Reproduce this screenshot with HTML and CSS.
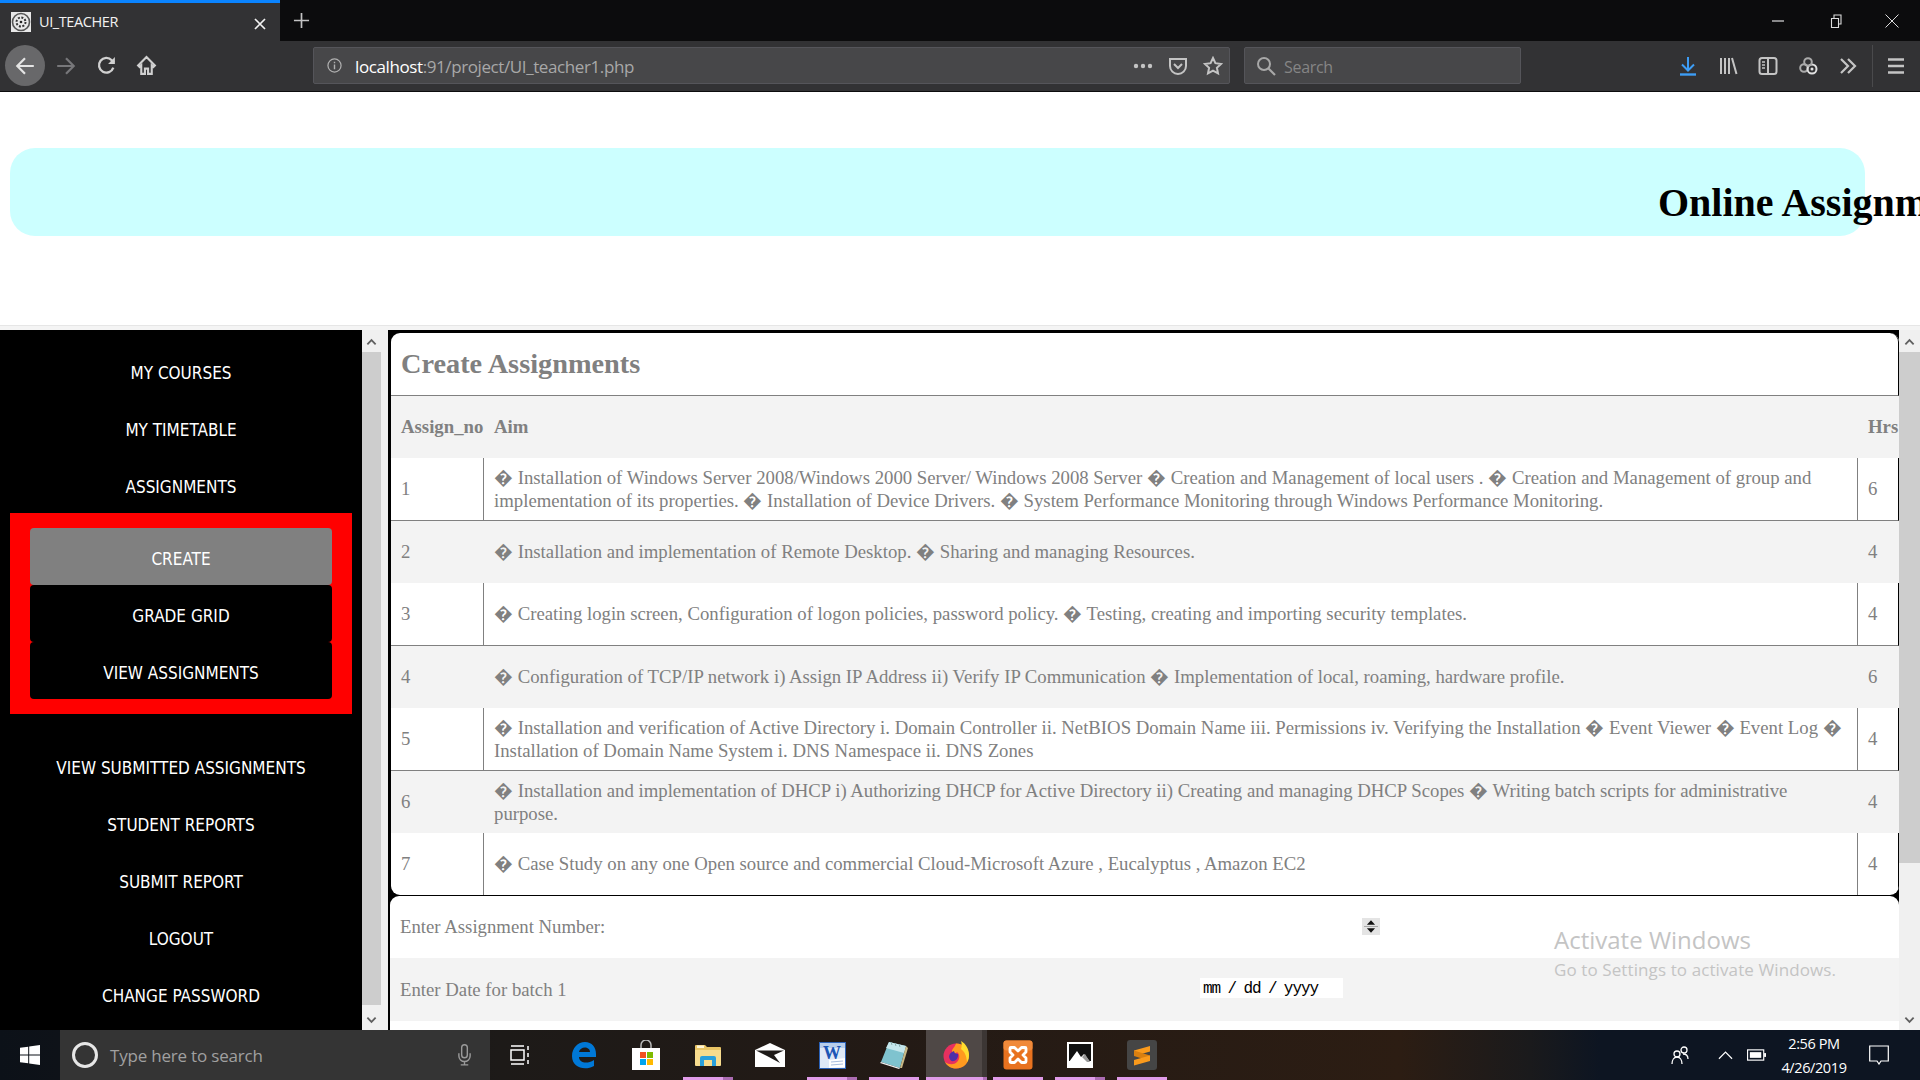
FILE: index.html
```html
<!DOCTYPE html>
<html lang="en">
<head>
    <meta charset="UTF-8">
    <meta name="viewport" content="width=device-width, initial-scale=1.0">
    <title>UI_TEACHER</title>
    <link rel="stylesheet" href="styles.css">
</head>
<body>
    <!-- browser chrome -->
    <header class="browser">
        <div class="tabstrip">
            <div class="tab">
                <svg class="favicon" viewBox="0 0 20 20"><rect width="20" height="20" fill="#e8e8e8"/><circle cx="10" cy="10" r="8.5" fill="none" stroke="#555" stroke-width="1.6"/><circle cx="10" cy="10" r="4.5" fill="none" stroke="#333" stroke-width="2" stroke-dasharray="2 1.5"/><circle cx="10" cy="10" r="1.3" fill="#222"/></svg>
                <span class="tab-title">UI_TEACHER</span>
                <svg class="tab-close" viewBox="0 0 14 14"><path d="M2 2l10 10M12 2L2 12" stroke="#f2f2f2" stroke-width="1.7"/></svg>
            </div>
            <svg class="tab-new" viewBox="0 0 18 18"><path d="M9 1v16M1 9h16" stroke="#c4c4c4" stroke-width="1.8"/></svg>
            <div class="window-btns">
                <svg class="win-btn" viewBox="0 0 14 14"><path d="M1 7h12" stroke="#ddd" stroke-width="1.2"/></svg>
                <svg class="win-btn" viewBox="0 0 14 14"><path d="M3.500 4.500h7v9h-7zM6 4.500V1h7v9h-2.500" fill="none" stroke="#ddd" stroke-width="1.100"/></svg>
                <svg class="win-btn" viewBox="0 0 14 14"><path d="M.5.5l13 13M13.500.5l-13 13" stroke="#ddd" stroke-width="1"/></svg>
            </div>
        </div>
        <div class="toolbar">
            <button class="tool-btn tool-back"><svg viewBox="0 0 20 20" width="22" height="22"><path d="M18 10H3M10 3l-7 7 7 7" fill="none" stroke="#e4e4e4" stroke-width="2"/></svg></button>
            <button class="tool-btn"><svg viewBox="0 0 20 20" width="22" height="22"><path d="M2 10h15M10 3l7 7-7 7" fill="none" stroke="#77777a" stroke-width="2"/></svg></button>
            <button class="tool-btn"><svg viewBox="0 0 20 20" width="21" height="21"><path d="M16.500 12a7 7 0 1 1-1.500-7l2 2" fill="none" stroke="#d0d0d0" stroke-width="2.200"/><path d="M18 2v6.500h-6.500z" fill="#d0d0d0"/></svg></button>
            <button class="tool-btn"><svg viewBox="0 0 20 20" width="21" height="21"><path d="M10 2L2 10l1.500 1.500L5 10v8h3.500v-5h3v5H15v-8l1.500 1.500L18 10z" fill="none" stroke="#d0d0d0" stroke-width="2"/></svg></button>

            <div class="urlbar">
                <svg class="url-info" viewBox="0 0 16 16"><circle cx="8" cy="8" r="7" fill="none" stroke="#b0b0b0" stroke-width="1.300"/><path d="M8 7v5M8 4v1.600" stroke="#b0b0b0" stroke-width="1.500"/></svg>
                <span class="url-text"><span class="url-host">localhost</span>:91/project/UI_teacher1.php</span>
                <svg class="url-dots" viewBox="0 0 20 6"><circle cx="3" cy="3" r="2.200" fill="#c4c4c4"/><circle cx="10" cy="3" r="2.200" fill="#c4c4c4"/><circle cx="17" cy="3" r="2.200" fill="#c4c4c4"/></svg>
                <svg class="url-icon" viewBox="0 0 20 20"><path d="M2 3h16v7a8 8 0 0 1-16 0z" fill="none" stroke="#c4c4c4" stroke-width="2"/><path d="M6 8l4 4 4-4" fill="none" stroke="#c4c4c4" stroke-width="2"/></svg>
                <svg class="url-icon url-star" viewBox="0 0 20 20"><path d="M10 2l2.400 5.200 5.600.7-4.100 3.900 1.100 5.600-5-2.800-5 2.800 1.100-5.600L2 7.900l5.600-.7z" fill="none" stroke="#c4c4c4" stroke-width="2"/></svg>
            </div>

            <div class="searchbar">
                <svg class="search-icon" viewBox="0 0 20 20"><circle cx="8" cy="8" r="6" fill="none" stroke="#a8a8a8" stroke-width="2"/><path d="M12.500 12.500L19 19" stroke="#a8a8a8" stroke-width="2.200"/></svg>
                <span class="search-text">Search</span>
            </div>

            <div class="tool-right">
                <svg class="tool-icon" viewBox="0 0 20 20"><path d="M10 1v13M4 8.500l6 6 6-6" fill="none" stroke="#3d9df5" stroke-width="2"/><path d="M2 18.500h16" stroke="#3d9df5" stroke-width="2.400"/></svg>
                <svg class="tool-icon" viewBox="0 0 20 20"><path d="M3 2v16M7 2v16M11 2v16M14 2l4.500 16" fill="none" stroke="#c4c4c4" stroke-width="2"/></svg>
                <svg class="tool-icon" viewBox="0 0 20 20"><rect x="1.500" y="2" width="17" height="16" rx="2.500" fill="none" stroke="#c4c4c4" stroke-width="2"/><path d="M10 2v16" stroke="#c4c4c4" stroke-width="2"/><path d="M4 6h3M4 9h3M4 12h3" stroke="#c4c4c4" stroke-width="1.500"/></svg>
                <svg class="tool-icon" viewBox="0 0 20 20"><circle cx="6" cy="12" r="3.800" fill="none" stroke="#aaa" stroke-width="2"/><circle cx="14" cy="13" r="4.500" fill="none" stroke="#e0e0e0" stroke-width="2"/><circle cx="10" cy="6" r="3.800" fill="none" stroke="#aaa" stroke-width="2"/><circle cx="14" cy="13" r="1.500" fill="#e0e0e0"/></svg>
                <svg class="tool-icon tool-chev" viewBox="0 0 20 20"><path d="M3 3l7 7-7 7M10 3l7 7-7 7" fill="none" stroke="#c4c4c4" stroke-width="2.200"/></svg>
                <span class="tool-sep"></span>
                <svg class="tool-icon tool-menu" viewBox="0 0 20 20"><path d="M2 3.500h16M2 10h16M2 16.500h16" stroke="#c4c4c4" stroke-width="2.400"/></svg>
            </div>
        </div>
    </header>

    <main class="page">
        <div class="banner-wrap">
            <div class="banner"><h1 class="banner-title">Online Assignm</h1></div>
        </div>
        <div class="frame-rule"></div>

        <div class="frames">
            <nav class="sidebar">
                <a class="menu-item" href="#">MY COURSES</a>
                <a class="menu-item" href="#">MY TIMETABLE</a>
                <a class="menu-item" href="#">ASSIGNMENTS</a>
                <div class="submenu">
                    <a class="menu-item menu-active" href="#">CREATE</a>
                    <a class="menu-item" href="#">GRADE GRID</a>
                    <a class="menu-item" href="#">VIEW ASSIGNMENTS</a>
                </div>
                <a class="menu-item" href="#">VIEW SUBMITTED ASSIGNMENTS</a>
                <a class="menu-item" href="#">STUDENT REPORTS</a>
                <a class="menu-item" href="#">SUBMIT REPORT</a>
                <a class="menu-item" href="#">LOGOUT</a>
                <a class="menu-item" href="#">CHANGE PASSWORD</a>
            </nav>

            <div class="scrollbar scrollbar-left">
                <svg class="scroll-arrow" viewBox="0 0 12 8"><path d="M1.500 6.500L6 2l4.500 4.500" fill="none" stroke="#606060" stroke-width="2"/></svg>
                <div class="scroll-track"><div class="scroll-thumb scroll-thumb-full"></div></div>
                <svg class="scroll-arrow" viewBox="0 0 12 8"><path d="M1.500 1.500L6 6l4.500-4.500" fill="none" stroke="#606060" stroke-width="2"/></svg>
            </div>

            <section class="content">
                <div class="table-card">
                    <h2 class="card-title">Create Assignments</h2>
                    <table class="assign-table">
                        <colgroup><col class="col-no"><col><col class="col-hrs"></colgroup>
                        <thead>
                            <tr><th>Assign_no</th><th>Aim</th><th class="cell-hrs">Hrs</th></tr>
                        </thead>
                        <tbody>
                            <tr><td>1</td><td>� Installation of Windows Server 2008/Windows 2000 Server/ Windows 2008 Server � Creation and Management of local users . � Creation and Management of group and implementation of its properties. � Installation of Device Drivers. � System Performance Monitoring through Windows Performance Monitoring.</td><td>6</td></tr>
                            <tr><td>2</td><td>� Installation and implementation of Remote Desktop. � Sharing and managing Resources.</td><td>4</td></tr>
                            <tr><td>3</td><td>� Creating login screen, Configuration of logon policies, password policy. � Testing, creating and importing security templates.</td><td>4</td></tr>
                            <tr><td>4</td><td>� Configuration of TCP/IP network i) Assign IP Address ii) Verify IP Communication � Implementation of local, roaming, hardware profile.</td><td>6</td></tr>
                            <tr><td>5</td><td>� Installation and verification of Active Directory i. Domain Controller ii. NetBIOS Domain Name iii. Permissions iv. Verifying the Installation � Event Viewer � Event Log � Installation of Domain Name System i. DNS Namespace ii. DNS Zones</td><td>4</td></tr>
                            <tr><td>6</td><td>� Installation and implementation of DHCP i) Authorizing DHCP for Active Directory ii) Creating and managing DHCP Scopes � Writing batch scripts for administrative purpose.</td><td>4</td></tr>
                            <tr><td>7</td><td>� Case Study on any one Open source and commercial Cloud-Microsoft Azure , Eucalyptus , Amazon EC2</td><td>4</td></tr>
                        </tbody>
                    </table>
                </div>

                <div class="form-card">
                    <div class="form-row">
                        <label class="form-label">Enter Assignment Number:</label>
                        <div class="spinner">
                            <svg class="spin-part" viewBox="0 0 10 6"><path d="M5 1l3.500 4h-7z" fill="#111"/></svg>
                            <svg class="spin-part" viewBox="0 0 10 6"><path d="M5 5L1.500 1h7z" fill="#111"/></svg>
                        </div>
                    </div>
                    <div class="form-row form-row-alt">
                        <label class="form-label">Enter Date for batch 1</label>
                        <div class="date-input">mm / dd / yyyy</div>
                    </div>
                    <div class="form-row"></div>
                </div>

                <div class="activate">
                    <div class="activate-head">Activate Windows</div>
                    <div class="activate-sub">Go to Settings to activate Windows.</div>
                </div>
            </section>

            <div class="scrollbar scrollbar-right">
                <svg class="scroll-arrow" viewBox="0 0 12 8"><path d="M1.500 6.500L6 2l4.500 4.500" fill="none" stroke="#606060" stroke-width="2"/></svg>
                <div class="scroll-track"><div class="scroll-thumb scroll-thumb-short"></div></div>
                <svg class="scroll-arrow" viewBox="0 0 12 8"><path d="M1.500 1.500L6 6l4.500-4.500" fill="none" stroke="#606060" stroke-width="2"/></svg>
            </div>
        </div>
    </main>

    <!-- windows taskbar -->
    <footer class="taskbar">
        <div class="start">
            <svg viewBox="0 0 20 20" width="20" height="20"><path d="M0 2.800L8.200 1.700v7.800H0zM9.200 1.500L20 0v9.500H9.200zM0 10.500h8.200v7.800L0 17.200zM9.200 10.500H20V20L9.200 18.500z" fill="#fff"/></svg>
        </div>
        <div class="task-search">
            <svg class="cortana" viewBox="0 0 28 28"><circle cx="14" cy="14" r="11.500" fill="none" stroke="#e6e6e6" stroke-width="3"/></svg>
            <span class="task-search-text">Type here to search</span>
            <svg class="task-mic" viewBox="0 0 16 24"><rect x="5" y="1" width="6" height="14" rx="3" fill="none" stroke="#9a9a9a" stroke-width="1.500"/><path d="M2 10v3a6 6 0 0 0 12 0v-3M8 19v3M4 22.500h8" fill="none" stroke="#9a9a9a" stroke-width="1.500"/></svg>
        </div>
        <div class="task-view">
            <svg viewBox="0 0 20 20" width="20" height="20"><path d="M1 1h13M1 19h13M1 5h13v10H1zM18 1v4M18 8v4M18 15v4" fill="none" stroke="#fff" stroke-width="1.500"/></svg>
        </div>
        <div class="task-apps">
            <div class="task-app">
                <svg viewBox="0 0 28 28" width="28" height="28"><path d="M2 15C2 7 8 1 15 1c7 0 11 5 11 12v3H9c0 5 7 8 15 3v6c-9 5-22 2-22-10zM9 11h11c0-6-10-6-11 0z" fill="#0078d7"/></svg>
            </div>
            <div class="task-app">
                <svg viewBox="0 0 28 30" width="28" height="30"><path d="M9 8V5a5 5 0 0 1 10 0v3" fill="none" stroke="#bbb" stroke-width="1.500"/><rect y="8" width="28" height="22" fill="#fff"/><rect x="8" y="12" width="6" height="6" fill="#f25022"/><rect x="15" y="12" width="6" height="6" fill="#7fba00"/><rect x="8" y="19" width="6" height="6" fill="#00a4ef"/><rect x="15" y="19" width="6" height="6" fill="#ffb900"/></svg>
            </div>
            <div class="task-app task-open task-split">
                <svg viewBox="0 0 28 22" width="28" height="22"><path d="M1 2a1 1 0 0 1 1-1h9l2 2h13a1 1 0 0 1 1 1v17H1z" fill="#e9c566"/><path d="M1 6h26v15a1 1 0 0 1-1 1H2a1 1 0 0 1-1-1z" fill="#f7dc8e"/><rect x="3" y="1.500" width="7" height="2.500" fill="#fff6d8"/><path d="M6 22V14a2 2 0 0 1 2-2h12a2 2 0 0 1 2 2v8h-4v-6h-8v6z" fill="#29a0dc"/></svg>
            </div>
            <div class="task-app">
                <svg viewBox="0 0 30 24" width="30" height="24"><path d="M0 7L15 0l15 7v17H0z" fill="#fff"/><path d="M1 7.500h28L19 12l6 8-13-7z" fill="#1e1a18"/></svg>
            </div>
            <div class="task-app task-open task-split">
                <svg viewBox="0 0 27 27" width="27" height="27"><rect x=".5" y=".5" width="26" height="26" fill="#dfe9f6" stroke="#2b62b8"/><rect x="1" y="1" width="25" height="5" fill="#b7cdea"/><text x="4" y="17" class="word-letter">W</text><path d="M10 18l16-2v9l-16 1z" fill="#fff"/><path d="M12 20l12-1M12 23l12-1" stroke="#a9bedd"/></svg>
            </div>
            <div class="task-app task-open">
                <svg viewBox="0 0 28 28" width="28" height="28"><path d="M9 1l17 4-6 22L1 21z" fill="#7fc3cf"/><path d="M9 1l17 4-2 7L6 7z" fill="#c4e6ec"/><path d="M20 27l6-22 2 2-6 20z" fill="#c9b986"/><path d="M1 21l19 6-1 1L0 22z" fill="#f1f1f1"/><path d="M11 1l1 3M15 2l1 3M19 3l1 3" stroke="#8aa" stroke-width="1"/></svg>
            </div>
            <div class="task-app task-open task-split task-current">
                <svg viewBox="0 0 28 28" width="28" height="28"><circle cx="14" cy="15" r="12.500" fill="#e8305f"/><path d="M14 2.500C22 2.500 27 8 27 15c0 7-5.500 12.500-13 12.500-5 0-9-2.500-11-6.500 4 3 9 3 12 0 3-3 3-8 0-10-1 2-5 2-5-1 0-2 3-4 4-7.500z" fill="#ff9a1f"/><path d="M19 0c5 3 8 8 8 14 0 3-.8 5-2 7-.5-6-2-10-6-13 .8-2 1-5.500 0-8z" fill="#ffdc2e"/><path d="M7 16c0-3 2-5 5-6 0 2 2 3 4 3 .5 3-1 6-4 7-2 .5-4 0-5-4z" fill="#4f2fa8"/></svg>
            </div>
            <div class="task-app task-open">
                <svg viewBox="0 0 30 30" width="30" height="30"><rect x=".5" y=".5" width="29" height="29" rx="3" fill="#e8721f"/><rect x=".5" y=".5" width="29" height="10" rx="3" fill="#f08a3a"/><path d="M8 7.500h3.500L15 11l3.500-3.500H22a1 1 0 0 1 1 1V12l-3 3 3 3v3.500a1 1 0 0 1-1 1h-3.500L15 19l-3.500 3.500H8a1 1 0 0 1-1-1V18l3-3-3-3V8.500a1 1 0 0 1 1-1z" fill="none" stroke="#fff" stroke-width="2.800" stroke-linejoin="round"/></svg>
            </div>
            <div class="task-app task-open task-split">
                <svg viewBox="0 0 26 26" width="26" height="26"><rect width="26" height="26" fill="#fff"/><rect x="2" y="2" width="22" height="17" fill="#111"/><path d="M2 20l8-11 4 6 3-3 7 9v3H2z" fill="#fff"/><path d="M15 15l3-3 5 8h-3z" fill="#999"/></svg>
            </div>
            <div class="task-app task-open">
                <svg viewBox="0 0 30 30" width="30" height="30"><rect width="30" height="30" rx="3" fill="#454545"/><path d="M23 6v5.500L7 16v-5.500z" fill="#fa9a1c"/><path d="M7 10.500l16 5v5.500L7 16z" fill="#d97f10"/><path d="M23 15.500V21L7 25.500V20z" fill="#fa9a1c"/></svg>
            </div>
        </div>
        <div class="tray">
            <svg class="tray-people" viewBox="0 0 20 20"><circle cx="7" cy="9" r="3" fill="none" stroke="#fff" stroke-width="1.300"/><circle cx="14" cy="5" r="3" fill="none" stroke="#fff" stroke-width="1.300"/><path d="M2 19c0-4 2-7 5-7s5 3 5 7M13 9c3 0 5 2 5 5" fill="none" stroke="#fff" stroke-width="1.300"/></svg>
            <svg class="tray-caret" viewBox="0 0 16 10"><path d="M1 9l7-7 7 7" fill="none" stroke="#fff" stroke-width="1.300"/></svg>
            <svg class="tray-battery" viewBox="0 0 20 12"><rect x=".6" y=".6" width="17" height="10.800" fill="none" stroke="#fff" stroke-width="1.200"/><rect x="3" y="3" width="12" height="6" fill="#fff"/><rect x="18" y="4" width="2" height="4" fill="#fff"/></svg>
            <div class="tray-clock"><span>2:56 PM</span><span>4/26/2019</span></div>
            <svg class="tray-note" viewBox="0 0 20 20"><path d="M.7 1h18.600v15H12l-2 3-2-3H.7z" fill="none" stroke="#fff" stroke-width="1.200"/></svg>
        </div>
    </footer>
</body>
</html>
```

FILE: styles.css
```css
/* page shell */
html, body {
    margin: 0;
    height: 100%;
}
body {
    display: flex;
    flex-direction: column;
    height: 1080px;
    overflow: hidden;
    background-color: #fff;
    font-family: "Liberation Serif", serif;
}
svg {
    display: block;
    flex: none;
}

/* browser chrome */
.browser {
    flex: none;
    font-family: "Open Sans", sans-serif;
}
.tabstrip {
    display: flex;
    align-items: center;
    height: 41px;
    background-color: #0c0c0d;
}
.tab {
    display: flex;
    align-items: center;
    box-sizing: border-box;
    width: 280px;
    height: 41px;
    padding: 3px 13px 0 11px;
    border-top: 3px solid #0a84ff;
    background-color: #323234;
    color: #f2f2f2;
    font-size: 14.500px;
    letter-spacing: -0.4px;
}
.favicon {
    width: 20px;
    height: 20px;
    margin-top: -3px;
}
.tab-title {
    margin: -5px 0 0 8px;
    flex: 1;
}
.tab-close {
    width: 14px;
    height: 14px;
}
.tab-new {
    width: 17px;
    height: 17px;
    margin-left: 13px;
}
.window-btns {
    display: flex;
    gap: 43px;
    margin-left: auto;
    margin-right: 21px;
}
.win-btn {
    width: 14px;
    height: 14px;
}
.toolbar {
    display: flex;
    align-items: center;
    box-sizing: border-box;
    height: 51px;
    padding: 0 0 1px 5px;
    border-bottom: 1px solid #0c0c0d;
    background-color: #323234;
}
.tool-btn {
    display: flex;
    align-items: center;
    justify-content: center;
    width: 40px;
    height: 41px;
    padding: 0;
    border: none;
    background: none;
}
.tool-back {
    border-radius: 50%;
    background-color: #68686a;
    margin-right: 1px;
}
.urlbar {
    display: flex;
    align-items: center;
    box-sizing: border-box;
    width: 917px;
    height: 37px;
    margin-left: 147px;
    padding: 0 6px 0 13px;
    border: 1px solid #55555a;
    border-radius: 2px;
    background-color: #474749;
    color: #a8a8a8;
    font-size: 17px;
    letter-spacing: -0.4px;
}
.url-info {
    width: 15px;
    height: 15px;
}
.url-text {
    flex: 1;
    margin: 2px 0 0 13px;
}
.url-host {
    color: #fff;
}
.url-dots {
    width: 20px;
    height: 6px;
    margin-right: 15px;
}
.url-icon {
    width: 20px;
    height: 20px;
}
.url-star {
    margin-left: 15px;
}
.searchbar {
    display: flex;
    align-items: center;
    box-sizing: border-box;
    width: 277px;
    height: 37px;
    margin-left: 14px;
    padding-left: 11px;
    border: 1px solid #55555a;
    border-radius: 2px;
    background-color: #474749;
    color: #858585;
    font-size: 16px;
    letter-spacing: -0.3px;
}
.search-icon {
    width: 20px;
    height: 20px;
    margin-right: 8px;
}
.search-text {
    margin-top: 2px;
}
.tool-right {
    display: flex;
    align-items: center;
    margin-left: 157px;
}
.tool-icon {
    width: 20px;
    height: 20px;
    margin-right: 20px;
}
.tool-chev {
    margin-right: 10px;
}
.tool-sep {
    width: 1px;
    height: 42px;
    margin: 0 13px 0 4px;
    background-color: #4a4a4c;
}
.tool-menu {
    margin-right: 0;
}

/* top of the page */
.page {
    flex: 1;
    min-height: 0;
    display: flex;
    flex-direction: column;
    position: relative;
}
.banner-wrap {
    flex: none;
    height: 177px;
    padding: 56px 0 0 10px;
}
.banner {
    display: flex;
    align-items: center;
    width: 1855px;
    height: 88px;
    border-radius: 25px;
    background-color: #ccffff;
    white-space: nowrap;
}
.banner-title {
    margin: 21px 0 0 1648px;
    color: #000;
    font-size: 40px;
}
.frame-rule {
    flex: none;
    height: 4px;
    border-top: 1px solid #e6e6e6;
    background-color: #f4f4f4;
}
.frames {
    flex: 1;
    min-height: 0;
    display: flex;
    background-color: #000;
    overflow: hidden;
}

/* left menu */
.sidebar {
    flex: none;
    width: 362px;
    padding-top: 12px;
    background-color: #000;
    font-family: "DejaVu Sans", sans-serif;
    font-stretch: condensed;
    font-size: 17px;
}
.menu-item {
    display: block;
    height: 57px;
    padding-top: 3px;
    box-sizing: border-box;
    line-height: 57px;
    color: #fff;
    text-align: center;
    text-decoration: none;
    border-radius: 4px;
}
.menu-active {
    background-color: #808080;
}
.submenu {
    width: 302px;
    margin: 0 10px 23px;
    padding: 15px 20px;
    background-color: #f00;
}
.submenu .menu-item {
    background-color: #000;
}
.submenu .menu-active {
    background-color: #808080;
}

/* frame scrollbars */
.scrollbar {
    flex: none;
    display: flex;
    flex-direction: column;
    align-items: center;
    background-color: #f0f0f0;
}
.scrollbar-left {
    box-sizing: border-box;
    width: 27px;
    padding: 2px 7px 0 0;
    border-right: 1px solid #000;
}
.scrollbar-right {
    box-sizing: border-box;
    width: 21px;
    padding: 2px 0 0 0;
}
.scroll-arrow {
    width: 11px;
    height: 8px;
    margin: 6px 0;
}
.scroll-track {
    flex: 1;
    width: 100%;
}
.scroll-thumb {
    width: 100%;
    background-color: #cdcdcd;
}
.scroll-thumb-full {
    height: 653px;
}
.scroll-thumb-short {
    height: 511px;
}

/* right frame */
.content {
    flex: 1;
    min-width: 0;
    position: relative;
    padding-top: 3px;
    overflow: hidden;
    color: #808080;
    font-size: 18.750px;
}
.table-card {
    margin-left: 2px;
    border-radius: 9px;
    background-color: #fff;
    overflow: hidden;
}
.card-title {
    box-sizing: border-box;
    height: 63px;
    margin: 0;
    padding-left: 10px;
    border-bottom: 1px solid #808080;
    border-right: 1px solid #000;
    border-top-right-radius: 9px;
    font-size: 28.300px;
    line-height: 61px;
}
.assign-table {
    width: 100%;
    table-layout: fixed;
    border-collapse: separate;
    border-spacing: 0;
    line-height: 23px;
}
.col-no {
    width: 93px;
}
.col-hrs {
    width: 41px;
}
.assign-table th,
.assign-table td {
    padding: 0 0 1px 10px;
    text-align: left;
}
.assign-table th:nth-child(2),
.assign-table td:nth-child(2) {
    padding-right: 10px;
}
.assign-table thead tr {
    height: 62px;
    background-color: #f3f3f3;
}
.assign-table tbody tr {
    height: 63px;
}
.assign-table tbody tr:nth-child(even) {
    height: 62px;
    background-color: #f3f3f3;
}
.assign-table tbody tr:nth-child(odd) td {
    border-bottom: 1px solid #808080;
}
.assign-table tbody tr:nth-child(odd) td:nth-child(1),
.assign-table tbody tr:nth-child(odd) td:nth-child(2) {
    border-right: 1px solid #808080;
}
.assign-table tbody tr:nth-child(odd) td:nth-child(3) {
    border-right: 1px solid #000;
}
.assign-table tbody tr:last-child td {
    border-bottom: none;
}
.assign-table tbody tr:last-child {
    height: 62px;
}
.form-card {
    margin: 1px 0 0 1px;
    border-radius: 9px 9px 0 0;
    background-color: #fff;
    overflow: hidden;
}
.form-row {
    display: flex;
    align-items: center;
    box-sizing: border-box;
    height: 62px;
    padding-left: 10px;
}
.form-row-alt {
    height: 63px;
    background-color: #f3f3f3;
}
.form-label {
    flex: none;
    width: 800px;
}
.spinner {
    box-sizing: border-box;
    width: 18px;
    height: 17px;
    margin-left: 162px;
    margin-top: -1px;
    padding: 1px 2px;
    background-color: #e4e4e4;
}
.spin-part {
    width: 14px;
    height: 7px;
}
.spin-part:first-child {
    border-bottom: 1px solid #a8a8a8;
}
.date-input {
    box-sizing: border-box;
    width: 143px;
    height: 20px;
    margin-top: -3px;
    padding-left: 3px;
    background-color: #fff;
    color: #000;
    font-family: "Liberation Mono", monospace;
    font-size: 16px;
    line-height: 23px;
    letter-spacing: -1px;
    word-spacing: -1.300px;
}

/* activation watermark */
.activate {
    position: absolute;
    left: 1165px;
    top: 594px;
    color: #c4c4c4;
    font-family: "Open Sans", sans-serif;
    white-space: nowrap;
}
.activate-head {
    font-size: 24px;
    line-height: 32px;
}
.activate-sub {
    margin-top: 2px;
    font-size: 17px;
    line-height: 24px;
    letter-spacing: 0.1px;
}

/* taskbar */
.taskbar {
    flex: none;
    display: flex;
    align-items: stretch;
    height: 50px;
    color: #fff;
    font-family: "Open Sans", sans-serif;
    background: linear-gradient(90deg, #0c1118 0, #1d1a18 500px, #231a15 900px, #2c1d13 1400px, #1a1a1c 1530px, #0d1522 1600px);
}
.start {
    flex: none;
    display: flex;
    align-items: center;
    justify-content: center;
    width: 60px;
}
.task-search {
    flex: none;
    display: flex;
    align-items: center;
    box-sizing: border-box;
    width: 430px;
    padding-left: 11px;
    background-color: #343434;
    color: #a0a0a0;
    font-size: 17px;
    letter-spacing: -0.2px;
}
.cortana {
    width: 28px;
    height: 28px;
}
.task-search-text {
    flex: 1;
    margin-left: 11px;
}
.task-mic {
    width: 15px;
    height: 24px;
    margin-right: 18px;
}
.task-view {
    flex: none;
    display: flex;
    align-items: center;
    justify-content: center;
    width: 63px;
    padding-right: 3px;
    box-sizing: border-box;
}
.task-apps {
    display: flex;
}
.task-app {
    position: relative;
    display: flex;
    align-items: center;
    justify-content: center;
    width: 62px;
}
.task-open::after {
    content: "";
    position: absolute;
    left: 6px;
    right: 6px;
    bottom: 0;
    height: 3px;
    background-color: #e09be8;
}
.task-split::before {
    content: "";
    position: absolute;
    right: 6px;
    bottom: 0;
    z-index: 1;
    width: 10px;
    height: 3px;
    background-color: #ab6cb2;
}
.task-current {
    width: 61px;
    padding-right: 1px;
    box-sizing: border-box;
    margin-left: 1px;
    background: linear-gradient(90deg, #4f4846 0, #4f4846 56px, #3c3634 56px);
}
.task-current::after {
    left: 0;
    right: 4px;
}
.task-current::before {
    right: 0;
    width: 4px;
}
.word-letter {
    fill: #1c56b5;
    font-family: "Liberation Serif", serif;
    font-size: 18px;
    font-weight: bold;
}
.tray {
    flex: 1;
    display: flex;
    align-items: center;
}
.tray-people {
    width: 20px;
    height: 20px;
    margin-left: 497px;
}
.tray-caret {
    width: 15px;
    height: 10px;
    margin-left: 28px;
}
.tray-battery {
    width: 19px;
    height: 12px;
    margin-left: 14px;
}
.tray-clock {
    display: flex;
    flex-direction: column;
    align-items: center;
    width: 88px;
    margin: 2px 0 0 4px;
    font-size: 14.500px;
    line-height: 24px;
    letter-spacing: -0.4px;
}
.tray-note {
    width: 20px;
    height: 20px;
    margin-left: 11px;
}
```
